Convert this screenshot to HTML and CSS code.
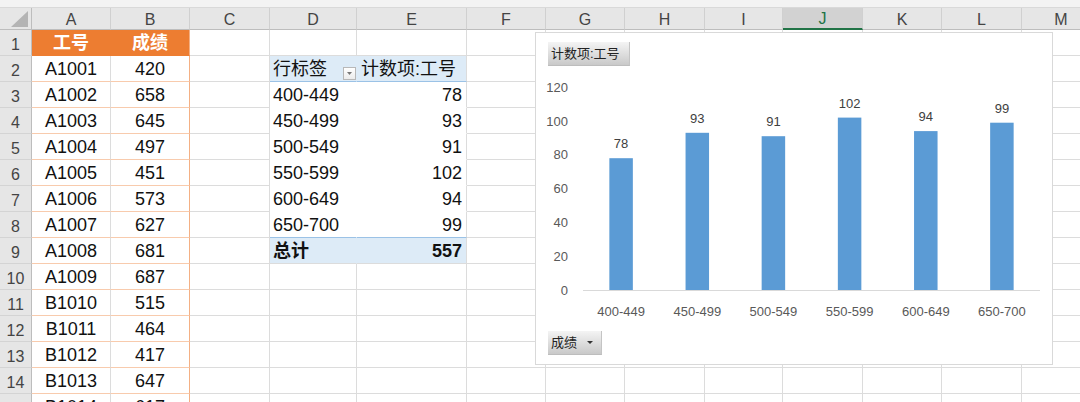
FILE: index.html
```html
<!DOCTYPE html>
<html lang="zh">
<head>
<meta charset="utf-8">
<title>Sheet</title>
<link rel="stylesheet" href="styles.css">
</head>
<body>
<div class="topbar"></div>
<div class="sheet">
  <div class="corner"><span class="tri"></span></div>
  <div class="hd">A</div><div class="hd">B</div><div class="hd">C</div><div class="hd">D</div><div class="hd">E</div><div class="hd">F</div><div class="hd">G</div><div class="hd">H</div><div class="hd">I</div><div class="hd sel">J</div><div class="hd">K</div><div class="hd">L</div><div class="hd">M</div>

  <div class="rh">1</div><div class="c oh">工号</div><div class="c oh ohb">成绩</div><div class="c"></div><div class="c"></div><div class="c"></div><div class="c"></div><div class="c"></div><div class="c"></div><div class="c"></div><div class="c"></div><div class="c"></div><div class="c"></div><div class="c"></div>

  <div class="rh">2</div><div class="c oa">A1001</div><div class="c ob">420</div><div class="c"></div><div class="c pvh pvd">行标签<span class="dd"><span class="ddtri"></span></span></div><div class="c pvh pve">计数项:工号</div><div class="c"></div><div class="c"></div><div class="c"></div><div class="c"></div><div class="c"></div><div class="c"></div><div class="c"></div><div class="c"></div>

  <div class="rh">3</div><div class="c oa">A1002</div><div class="c ob">658</div><div class="c"></div><div class="c pl">400-449</div><div class="c pn">78</div><div class="c"></div><div class="c"></div><div class="c"></div><div class="c"></div><div class="c"></div><div class="c"></div><div class="c"></div><div class="c"></div>

  <div class="rh">4</div><div class="c oa">A1003</div><div class="c ob">645</div><div class="c"></div><div class="c pl">450-499</div><div class="c pn">93</div><div class="c"></div><div class="c"></div><div class="c"></div><div class="c"></div><div class="c"></div><div class="c"></div><div class="c"></div><div class="c"></div>

  <div class="rh">5</div><div class="c oa">A1004</div><div class="c ob">497</div><div class="c"></div><div class="c pl">500-549</div><div class="c pn">91</div><div class="c"></div><div class="c"></div><div class="c"></div><div class="c"></div><div class="c"></div><div class="c"></div><div class="c"></div><div class="c"></div>

  <div class="rh">6</div><div class="c oa">A1005</div><div class="c ob">451</div><div class="c"></div><div class="c pl">550-599</div><div class="c pn">102</div><div class="c"></div><div class="c"></div><div class="c"></div><div class="c"></div><div class="c"></div><div class="c"></div><div class="c"></div><div class="c"></div>

  <div class="rh">7</div><div class="c oa">A1006</div><div class="c ob">573</div><div class="c"></div><div class="c pl">600-649</div><div class="c pn">94</div><div class="c"></div><div class="c"></div><div class="c"></div><div class="c"></div><div class="c"></div><div class="c"></div><div class="c"></div><div class="c"></div>

  <div class="rh">8</div><div class="c oa">A1007</div><div class="c ob">627</div><div class="c"></div><div class="c pl plast">650-700</div><div class="c pn plast">99</div><div class="c"></div><div class="c"></div><div class="c"></div><div class="c"></div><div class="c"></div><div class="c"></div><div class="c"></div><div class="c"></div>

  <div class="rh">9</div><div class="c oa">A1008</div><div class="c ob">681</div><div class="c"></div><div class="c ptot ptd">总计</div><div class="c ptot pte">557</div><div class="c"></div><div class="c"></div><div class="c"></div><div class="c"></div><div class="c"></div><div class="c"></div><div class="c"></div><div class="c"></div>

  <div class="rh">10</div><div class="c oa">A1009</div><div class="c ob">687</div><div class="c"></div><div class="c"></div><div class="c"></div><div class="c"></div><div class="c"></div><div class="c"></div><div class="c"></div><div class="c"></div><div class="c"></div><div class="c"></div><div class="c"></div>

  <div class="rh">11</div><div class="c oa">B1010</div><div class="c ob">515</div><div class="c"></div><div class="c"></div><div class="c"></div><div class="c"></div><div class="c"></div><div class="c"></div><div class="c"></div><div class="c"></div><div class="c"></div><div class="c"></div><div class="c"></div>

  <div class="rh">12</div><div class="c oa">B1011</div><div class="c ob">464</div><div class="c"></div><div class="c"></div><div class="c"></div><div class="c"></div><div class="c"></div><div class="c"></div><div class="c"></div><div class="c"></div><div class="c"></div><div class="c"></div><div class="c"></div>

  <div class="rh">13</div><div class="c oa">B1012</div><div class="c ob">417</div><div class="c"></div><div class="c"></div><div class="c"></div><div class="c"></div><div class="c"></div><div class="c"></div><div class="c"></div><div class="c"></div><div class="c"></div><div class="c"></div><div class="c"></div>

  <div class="rh">14</div><div class="c oa">B1013</div><div class="c ob">647</div><div class="c"></div><div class="c"></div><div class="c"></div><div class="c"></div><div class="c"></div><div class="c"></div><div class="c"></div><div class="c"></div><div class="c"></div><div class="c"></div><div class="c"></div>

  <div class="rh">15</div><div class="c oa">B1014</div><div class="c ob">617</div><div class="c"></div><div class="c"></div><div class="c"></div><div class="c"></div><div class="c"></div><div class="c"></div><div class="c"></div><div class="c"></div><div class="c"></div><div class="c"></div><div class="c"></div>
</div>

<div class="chart">
  <svg class="plot" width="516" height="331" viewBox="536 33 516 331">
    <g class="ylab">
      <text x="568" y="91.7">120</text>
      <text x="568" y="125.5">100</text>
      <text x="568" y="159.3">80</text>
      <text x="568" y="193.1">60</text>
      <text x="568" y="226.9">40</text>
      <text x="568" y="260.7">20</text>
      <text x="568" y="294.5">0</text>
    </g>
    <g class="bars">
      <rect x="609.35" y="158.2" width="23.5" height="131.8"/>
      <rect x="685.55" y="132.8" width="23.5" height="157.2"/>
      <rect x="761.65" y="136.2" width="23.5" height="153.8"/>
      <rect x="837.85" y="117.6" width="23.5" height="172.4"/>
      <rect x="914.05" y="131.1" width="23.5" height="158.9"/>
      <rect x="990.15" y="122.7" width="23.5" height="167.3"/>
    </g>
    <line class="axis" x1="583" y1="290.5" x2="1040" y2="290.5"/>
    <g class="dlab">
      <text x="621.1" y="148.2">78</text>
      <text x="697.3" y="122.8">93</text>
      <text x="773.4" y="126.2">91</text>
      <text x="849.6" y="107.6">102</text>
      <text x="925.8" y="121.1">94</text>
      <text x="1001.9" y="112.7">99</text>
    </g>
    <g class="xlab">
      <text x="621.1" y="316">400-449</text>
      <text x="697.3" y="316">450-499</text>
      <text x="773.4" y="316">500-549</text>
      <text x="849.6" y="316">550-599</text>
      <text x="925.8" y="316">600-649</text>
      <text x="1001.9" y="316">650-700</text>
    </g>
  </svg>
  <div class="fbtn ftitle">计数项:工号</div>
  <div class="fbtn faxis">成绩<span class="ftri"></span></div>
</div>
</body>
</html>
```

FILE: styles.css
```css
* { box-sizing: border-box; margin: 0; padding: 0; }
body {
  margin: 0;
  width: 1080px;
  height: 402px;
  overflow: hidden;
  background: #fff;
  position: relative;
  font-family: "Liberation Sans", "Noto Sans CJK SC", sans-serif;
}
.topbar {
  height: 8px;
  background: #f3f3f3;
  border-bottom: 1px solid #d9d9d9;
}
.sheet {
  display: grid;
  grid-template-columns: 32px 79px 79px 80px 87px 110px 79px 79px 80px 78px 80px 79px 80px 79px;
  grid-template-rows: 22px repeat(15, 26px);
  width: 1101px;
}
.corner {
  background: #e6e6e6;
  border-right: 1px solid #bdbdbd;
  border-bottom: 1px solid #bdbdbd;
  display: flex;
  justify-content: flex-end;
  align-items: flex-end;
  padding: 0 3px 2px 0;
}
.corner .tri {
  width: 17px;
  height: 16px;
  background: #b4b4b4;
  clip-path: polygon(100% 0, 100% 100%, 0 100%);
}
.hd {
  background: #e6e6e6;
  border-right: 1px solid #d0d0d0;
  border-bottom: 1px solid #bdbdbd;
  font-size: 16px;
  line-height: 18px;
  color: #444;
  display: flex;
  align-items: center;
  justify-content: center;
  padding-top: 2px;
}
.hd.sel {
  background: #d2d2d2;
  border-bottom: 2px solid #217346;
  color: #217346;
}
.rh {
  background: #e6e6e6;
  border-right: 1px solid #bdbdbd;
  border-bottom: 1px solid #d4d4d4;
  font-size: 16px;
  line-height: 18px;
  color: #444;
  display: flex;
  align-items: center;
  justify-content: center;
  padding-top: 5px;
}
.c {
  border-right: 1px solid #dcdcdc;
  border-bottom: 1px solid #dcdcdc;
  font-size: 18px;
  line-height: 20px;
  color: #111;
  display: flex;
  align-items: center;
  white-space: nowrap;
  overflow: hidden;
}
.oh {
  background: #ed7d31;
  border-right-color: #ed7d31;
  border-bottom-color: #ed7d31;
  color: #fff;
  font-weight: bold;
  justify-content: center;
}
.ohb { border-right-color: #f4b084; }
.oa {
  justify-content: center;
  border-bottom-color: #f8cbad;
}
.ob {
  justify-content: center;
  border-bottom-color: #f8cbad;
  border-right-color: #f4b084;
}
.pvh {
  background: #ddebf7;
  border-bottom-color: #9bc2e6;
}
.pvd {
  border-right-color: #ddebf7;
  padding-left: 3px;
}
.pve { padding-left: 4px; }
.dd {
  margin-left: auto;
  margin-right: 0;
  align-self: flex-end;
  margin-bottom: 1px;
  width: 13px;
  height: 13px;
  border: 1px solid #b8b8b8;
  background: linear-gradient(#ffffff, #ececec);
  display: flex;
  align-items: center;
  justify-content: center;
}
.ddtri {
  width: 5px;
  height: 3px;
  background: #777;
  clip-path: polygon(0 0, 100% 0, 50% 100%);
}
.pl {
  border-right-color: #fff;
  border-bottom-color: #fff;
  padding-left: 3px;
}
.pn {
  border-bottom-color: #fff;
  justify-content: flex-end;
  padding-right: 4px;
}
.plast { border-bottom-color: #9bc2e6; }
.pl.plast { border-right-color: #fff; }
.ptot {
  background: #ddebf7;
  font-weight: bold;
}
.ptd {
  border-right-color: #ddebf7;
  padding-left: 3px;
}
.pte {
  justify-content: flex-end;
  padding-right: 4px;
}

.chart {
  position: absolute;
  left: 535px;
  top: 32px;
  width: 518px;
  height: 333px;
  background: #fff;
  border: 1px solid #d9d9d9;
}
.plot {
  position: absolute;
  left: 0;
  top: 0;
  display: block;
}
.plot text {
  font-family: "Liberation Sans", "Noto Sans CJK SC", sans-serif;
  font-size: 13px;
}
.ylab text { fill: #595959; text-anchor: end; }
.xlab text { fill: #595959; text-anchor: middle; }
.dlab text { fill: #404040; text-anchor: middle; }
.bars rect { fill: #5b9bd5; }
.axis { stroke: #d9d9d9; stroke-width: 1; }
.fbtn {
  position: absolute;
  height: 24px;
  background: linear-gradient(#f4f4f4, #c9c9c9);
  border-right: 1px solid #c4c4c4;
  border-bottom: 1px solid #bdbdbd;
  font-size: 13px;
  line-height: 16px;
  color: #222;
  display: flex;
  align-items: center;
  padding-left: 3px;
}
.ftitle {
  left: 12px;
  top: 9px;
  width: 82px;
}
.faxis {
  left: 12px;
  top: 298px;
  width: 54px;
}
.ftri {
  margin-left: auto;
  margin-right: 8px;
  width: 6px;
  height: 3px;
  background: #333;
  clip-path: polygon(0 0, 100% 0, 50% 100%);
}
```
